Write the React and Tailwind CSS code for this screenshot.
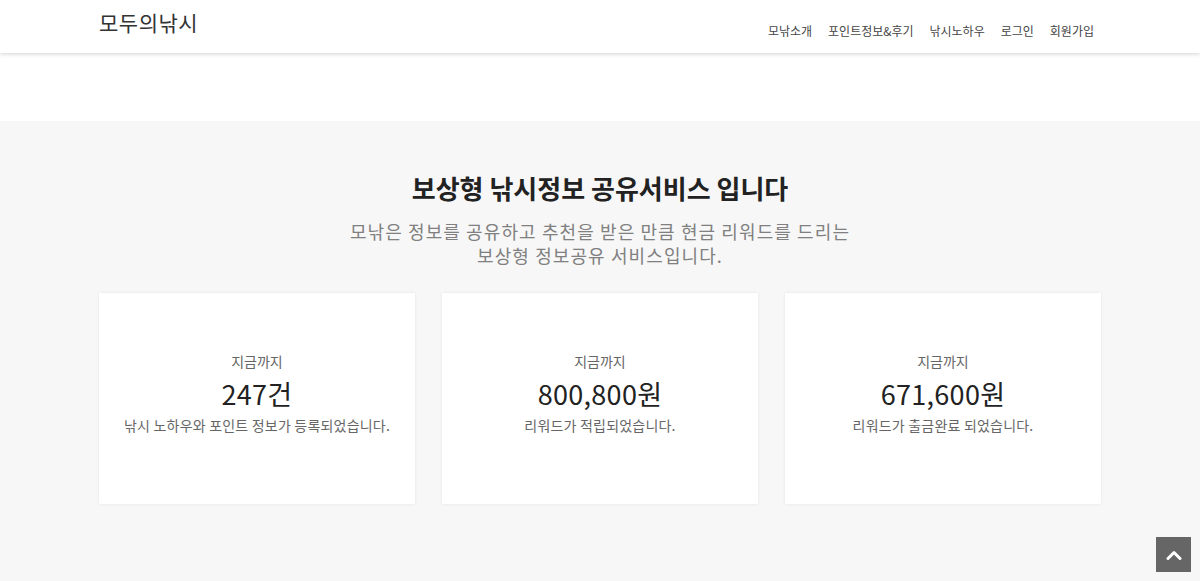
import React from 'react';

const font = { fontFamily: '"Noto Sans CJK KR", "Noto Sans", sans-serif' };

const stats = [
  { value: '247건', desc: '낚시 노하우와 포인트 정보가 등록되었습니다.' },
  { value: '800,800원', desc: '리워드가 적립되었습니다.' },
  { value: '671,600원', desc: '리워드가 출금완료 되었습니다.' },
];

const menu = ['모낚소개', '포인트정보&후기', '낚시노하우', '로그인', '회원가입'];

export default function App() {
  return (
    <div className="min-h-[581px] bg-white text-[#333]" style={font}>
      {/* Header */}
      <header className="relative z-10 h-[53px] bg-white shadow-[0_1px_4px_rgba(0,0,0,0.18)]">
        <div className="mx-auto flex h-full w-[1002px] items-start justify-between">
          <a className="mt-[8px] text-[21px] leading-[28px] tracking-[0.5px] text-[#333]">모두의낚시</a>
          <nav className="mt-[21px] flex gap-[16px] pr-[7px] text-[12px] leading-[20px] text-[#444]">
            {menu.map((m) => (
              <a key={m}>{m}</a>
            ))}
          </nav>
        </div>
      </header>

      <div className="h-[68px] bg-white" />

      {/* Stats section */}
      <section className="bg-[#f7f7f7] pb-[82px] pt-[49px]">
        <div className="mx-auto w-[1002px] text-center">
          <h2 className="text-[26px] font-bold leading-[36px] text-[#222]">보상형 낚시정보 공유서비스 입니다</h2>
          <p className="mt-[13px] text-[18px] leading-[24px] tracking-[1.1px] text-[#808080]">
            모낚은 정보를 공유하고 추천을 받은 만큼 현금 리워드를 드리는
            <br />
            보상형 정보공유 서비스입니다.
          </p>
          <div className="mt-[26px] grid grid-cols-3 gap-[27px]">
            {stats.map((s) => (
              <div
                key={s.value}
                className="flex h-[211px] flex-col items-center justify-center bg-white pb-[12px] shadow-[0_0_3px_rgba(0,0,0,0.08)]"
              >
                <div className="text-[14px] leading-[20px] text-[#666]">지금까지</div>
                <div className="mt-[6px] text-[27px] leading-[34px] tracking-[0.3px] text-[#222]">{s.value}</div>
                <div className="mt-[4px] text-[14px] leading-[20px] tracking-[0.2px] text-[#666]">{s.desc}</div>
              </div>
            ))}
          </div>
        </div>
      </section>

      {/* Scroll to top */}
      <button className="fixed bottom-[9px] right-[9px] flex h-[35px] w-[35px] items-center justify-center bg-[#666]">
        <svg width="16" height="12" viewBox="0 0 16 12" fill="none">
          <path d="M2 9.5 L8 3.5 L14 9.5" stroke="white" strokeWidth="3" strokeLinecap="round" strokeLinejoin="round" />
        </svg>
      </button>
    </div>
  );
}
